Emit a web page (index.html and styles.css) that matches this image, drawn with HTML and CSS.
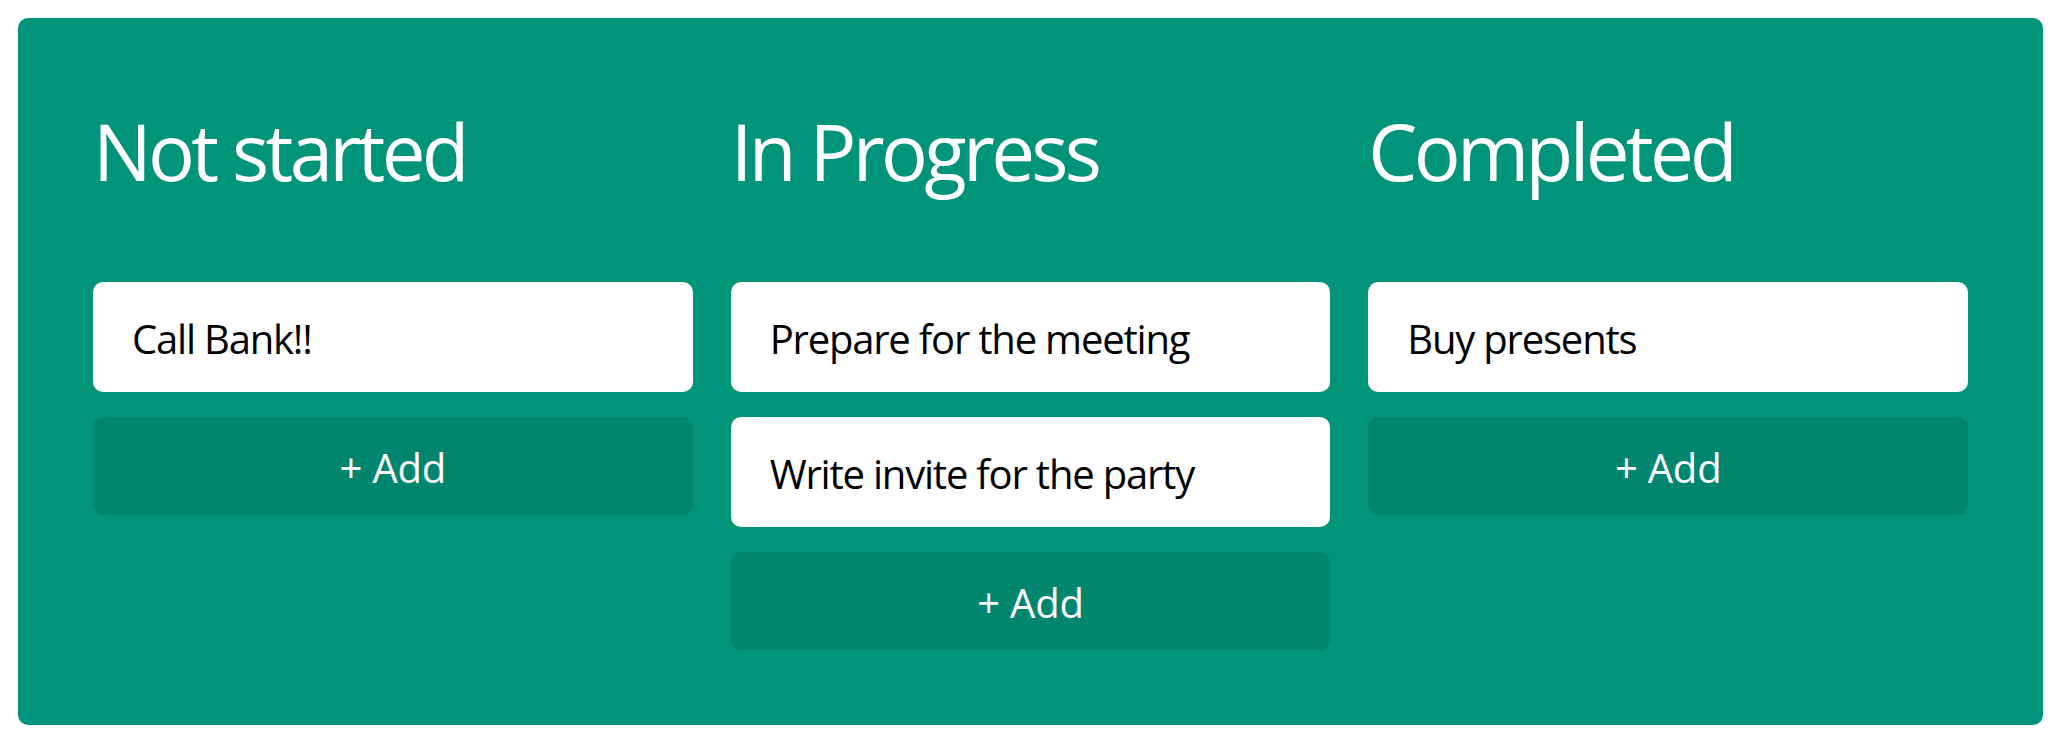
FILE: index.html
```html
<!DOCTYPE html>
<html lang="en">
<head>
<meta charset="utf-8">
<title>Board</title>
<link rel="stylesheet" href="styles.css">
</head>
<body>
<main class="board">
  <section class="column">
    <h2 class="column-title">Not started</h2>
    <div class="card">Call Bank!!</div>
    <button class="add-btn">+ Add</button>
  </section>
  <section class="column">
    <h2 class="column-title">In Progress</h2>
    <div class="card">Prepare for the meeting</div>
    <div class="card">Write invite for the party</div>
    <button class="add-btn">+ Add</button>
  </section>
  <section class="column">
    <h2 class="column-title">Completed</h2>
    <div class="card">Buy presents</div>
    <button class="add-btn">+ Add</button>
  </section>
</main>
</body>
</html>
```

FILE: styles.css
```css
* {
  box-sizing: border-box;
}

html, body {
  background: #ffffff;
}

body {
  margin: 18px 12px 17px 18px;
  font-family: "Open Sans", "Noto Sans", sans-serif;
}

.board {
  background: #00957a;
  border-radius: 10px;
  padding: 75px;
  display: grid;
  grid-template-columns: 1fr 1fr 1fr;
  column-gap: 38px;
  align-items: start;
}

.column {
  display: flex;
  flex-direction: column;
  gap: 25px;
}

.column-title {
  margin: 5px 0 53px 0;
  font-size: 78px;
  font-weight: 400;
  line-height: 106px;
  letter-spacing: -0.047em;
  color: #ffffff;
}

.card {
  background: #ffffff;
  color: #000000;
  border-radius: 10px;
  padding: 30px 39px 26px 39px;
  font-size: 40px;
  line-height: 54px;
  letter-spacing: -0.03em;
}

.add-btn {
  display: block;
  width: 100%;
  border: none;
  background: #00866e;
  color: #ffffff;
  border-radius: 10px;
  padding: 24px 0 20px 0;
  font-family: inherit;
  font-size: 40px;
  line-height: 54px;
  letter-spacing: -0.005em;
  text-align: center;
  cursor: pointer;
}
```
